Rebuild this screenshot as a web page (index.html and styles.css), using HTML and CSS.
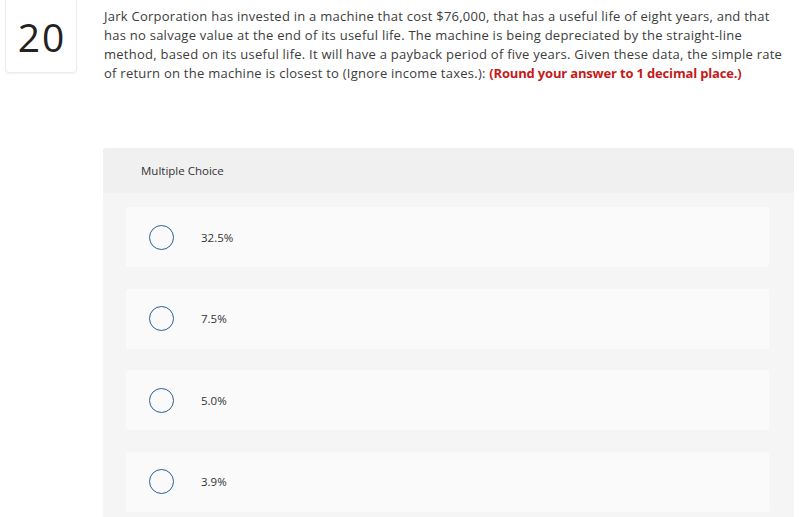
FILE: index.html
```html
<!DOCTYPE html>
<html>
<head>
<meta charset="utf-8">
<link rel="stylesheet" href="styles.css">
</head>
<body>
<div class="question">
  <div class="qnum">20</div>
  <p class="qtext">Jark Corporation has invested in a machine that cost $76,000, that has a useful life of eight years, and that<br>has no salvage value at the end of its useful life. The machine is being depreciated by the straight-line<br>method, based on its useful life. It will have a payback period of five years. Given these data, the simple rate<br>of return on the machine is closest to (Ignore income taxes.): <strong class="hint">(Round your answer to 1 decimal place.)</strong></p>
</div>
<div class="panel">
  <div class="panel-head">Multiple Choice</div>
  <div class="panel-body">
    <div class="choice"><span class="radio"></span><span class="label">32.5%</span></div>
    <div class="choice"><span class="radio"></span><span class="label">7.5%</span></div>
    <div class="choice"><span class="radio"></span><span class="label">5.0%</span></div>
    <div class="choice"><span class="radio"></span><span class="label">3.9%</span></div>
  </div>
</div>
</body>
</html>
```
FILE: styles.css
```css
html, body {
  margin: 0;
  padding: 0;
  background: #fff;
  font-family: "Open Sans", sans-serif;
  color: #333;
  overflow: hidden;
}
.question {
  display: flex;
  align-items: flex-start;
}
.qnum {
  flex: none;
  width: 72px;
  height: 84px;
  margin: -11px 0 0 5px;
  box-sizing: border-box;
  border: 1px solid #ececec;
  border-radius: 4px;
  box-shadow: 0 1px 2px rgba(0,0,0,0.06);
  display: flex;
  align-items: center;
  justify-content: center;
  padding-top: 10px;
  font-family: "Open Sans", sans-serif;
  font-size: 39px;
  letter-spacing: 2px;
  text-indent: 2px;
  color: #222;
}
.qtext {
  margin: 7px 0 0 27px;
  width: 700px;
  white-space: nowrap;
  font-size: 13px;
  letter-spacing: 0.25px;
  line-height: 19px;
  color: #3c3c3c;
}
.hint {
  color: #c41a1a;
  font-weight: 700;
  letter-spacing: -0.17px;
}
.panel {
  margin: 65px 0 0 103px;
  width: 691px;
}
.panel-head {
  height: 45px;
  display: flex;
  align-items: center;
  padding-left: 38px;
  background: #f0f0f0;
  font-size: 11.5px;
  color: #333;
  border-radius: 3px 3px 0 0;
}
.panel-body {
  background: #f5f5f5;
  padding: 14px 25px 20px 23px;
  display: flex;
  flex-direction: column;
  gap: 21.5px;
}
.choice {
  height: 60px;
  background: #fafafa;
  border-radius: 3px;
  display: flex;
  align-items: center;
}
.radio {
  flex: none;
  width: 25px;
  height: 25px;
  box-sizing: border-box;
  border: 1.5px solid #2a6099;
  border-radius: 50%;
  margin-left: 23px;
}
.label {
  margin-left: 27px;
  font-size: 11.5px;
  color: #333;
}
```
